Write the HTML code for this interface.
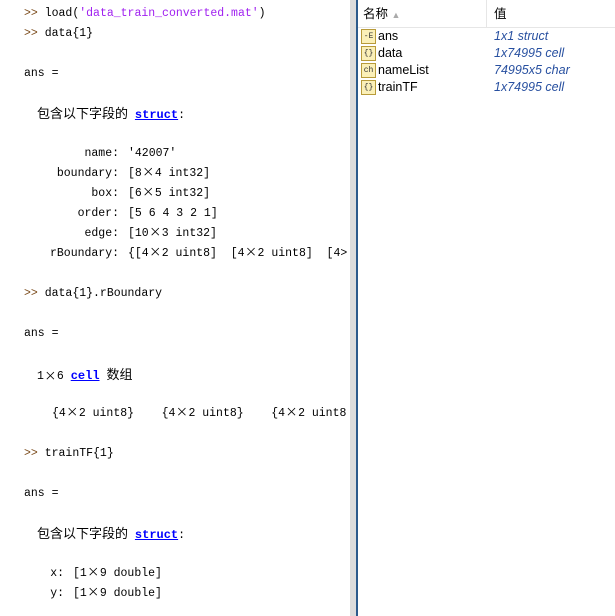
<!DOCTYPE html>
<html><head><meta charset="utf-8"><style>
body{margin:0;width:615px;height:616px;overflow:hidden;background:#fff;position:relative;font-family:"Liberation Mono","Noto Sans CJK SC",monospace;font-size:11.5px;letter-spacing:0;color:#000}
.l{position:absolute;white-space:pre;line-height:16px;height:16px}
.p{color:#7a4a1a}
.s{color:#a020f0}
.c{font-family:"Noto Sans CJK SC",sans-serif;font-size:13px;letter-spacing:0}
.x{font-family:"Noto Sans CJK SC",sans-serif;font-size:12px;display:inline-block;width:13px;text-align:center;line-height:16px;height:16px;vertical-align:top;position:relative;top:-2px}
.k{color:#0000ff;font-weight:bold;text-decoration:underline;font-size:12px}
#left{position:absolute;left:0;top:0;width:350px;height:616px;overflow:hidden}
.f{position:absolute;white-space:pre;line-height:16px;height:16px;text-align:right;width:119px;left:0}
.v{position:absolute;white-space:pre;line-height:16px;height:16px;left:128px}
#div1{position:absolute;left:350px;top:0;width:6px;height:616px;background:#dcdcdc}
#div2{position:absolute;left:356px;top:0;width:2px;height:616px;background:#2c5a8c}
#right{position:absolute;left:358px;top:0;width:257px;height:616px;background:#fff;font-family:"Liberation Sans","Noto Sans CJK SC",sans-serif;font-size:12.5px;letter-spacing:0}
.hd{position:absolute;top:0;height:27px;line-height:28px;border-bottom:1px solid #e6e6e6;background:#fff}
.r{position:absolute;left:0;height:17px;line-height:17px;width:257px}
.ic{position:absolute;left:3px;top:1px;width:13px;height:13px;border:1px solid #b89b3a;background:#fbf0b8;font-size:8px;line-height:13px;text-align:center;font-family:"Liberation Mono",monospace;color:#333}
.nm{position:absolute;left:20px;color:#000}
.vl{position:absolute;left:136px;color:#2850a0;font-style:italic}
</style></head><body>
<div id="left">
<div class="l" style="left:24px;top:6px"><span class="p">&gt;&gt;</span> load(<span class="s">'data_train_converted.mat'</span>)</div>
<div class="l" style="left:24px;top:26px"><span class="p">&gt;&gt;</span> data{1}</div>
<div class="l" style="left:24px;top:66px">ans =</div>
<div class="l" style="left:37px;top:105px"><span class="c">包含以下字段的</span> <span class="k">struct</span>:</div>
<div class="f" style="top:146px">name:</div><div class="v" style="top:146px">'42007'</div>
<div class="f" style="top:166px">boundary:</div><div class="v" style="top:166px">[8<span class="x">×</span>4 int32]</div>
<div class="f" style="top:186px">box:</div><div class="v" style="top:186px">[6<span class="x">×</span>5 int32]</div>
<div class="f" style="top:206px">order:</div><div class="v" style="top:206px">[5 6 4 3 2 1]</div>
<div class="f" style="top:226px">edge:</div><div class="v" style="top:226px">[10<span class="x">×</span>3 int32]</div>
<div class="f" style="top:246px">rBoundary:</div><div class="v" style="top:246px">{[4<span class="x">×</span>2 uint8]  [4<span class="x">×</span>2 uint8]  [4&gt;</div>
<div class="l" style="left:24px;top:286px"><span class="p">&gt;&gt;</span> data{1}.rBoundary</div>
<div class="l" style="left:24px;top:326px">ans =</div>
<div class="l" style="left:37px;top:366px">1<span class="x" style="top:2px">×</span>6 <span class="k">cell</span> <span class="c">数组</span></div>
<div class="l" style="left:52px;top:406px">{4<span class="x">×</span>2 uint8}    {4<span class="x">×</span>2 uint8}    {4<span class="x">×</span>2 uint8</div>
<div class="l" style="left:24px;top:446px"><span class="p">&gt;&gt;</span> trainTF{1}</div>
<div class="l" style="left:24px;top:486px">ans =</div>
<div class="l" style="left:37px;top:525px"><span class="c">包含以下字段的</span> <span class="k">struct</span>:</div>
<div class="f" style="top:566px;width:64px">x:</div><div class="v" style="top:566px;left:73px">[1<span class="x">×</span>9 double]</div>
<div class="f" style="top:586px;width:64px">y:</div><div class="v" style="top:586px;left:73px">[1<span class="x">×</span>9 double]</div>
</div>
<div id="div1"></div><div id="div2"></div>
<div id="right">
<div class="hd" style="left:0;width:128px;border-right:1px solid #e6e6e6"><span style="position:absolute;left:5px">名称 <span style="color:#aaa;font-size:9px">▲</span></span></div>
<div class="hd" style="left:129px;width:128px"><span style="position:absolute;left:7px">值</span></div>
<div class="r" style="top:28px"><div class="ic">-E</div><span class="nm">ans</span><span class="vl">1x1 struct</span></div>
<div class="r" style="top:45px"><div class="ic">{}</div><span class="nm">data</span><span class="vl">1x74995 cell</span></div>
<div class="r" style="top:62px"><div class="ic">ch</div><span class="nm">nameList</span><span class="vl">74995x5 char</span></div>
<div class="r" style="top:79px"><div class="ic">{}</div><span class="nm">trainTF</span><span class="vl">1x74995 cell</span></div>
</div>
</body></html>
